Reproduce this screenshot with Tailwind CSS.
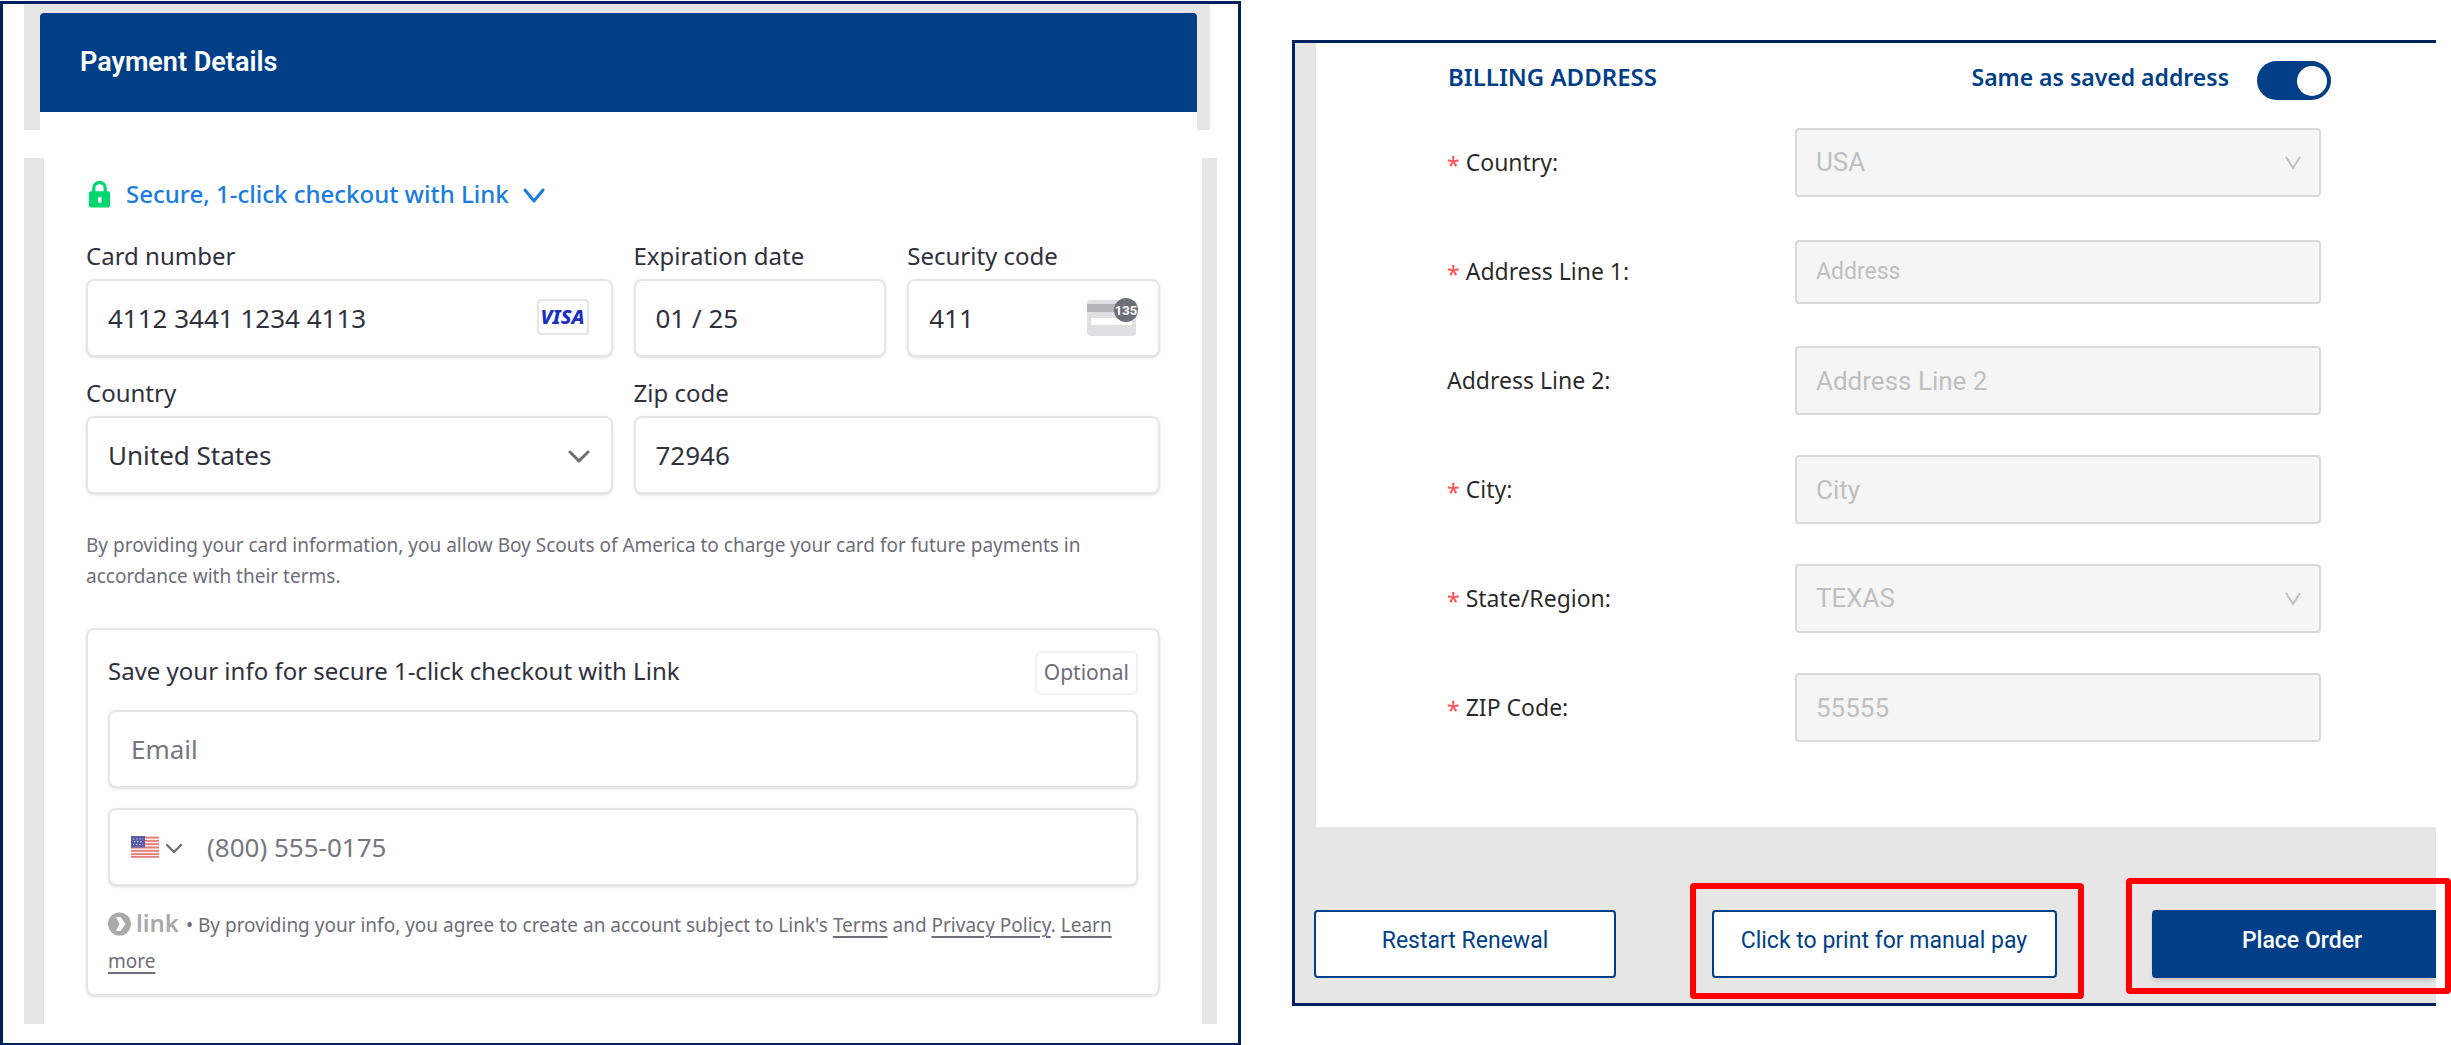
<!DOCTYPE html>
<html lang="en">
<head>
    <meta charset="UTF-8">
    <meta name="viewport" content="width=device-width, initial-scale=1.0">
    <title>Payment Details</title>
    <script src="https://cdn.jsdelivr.net/npm/@tailwindcss/browser@4"></script>
</head>
<body class="bg-white font-['Noto_Sans',sans-serif] text-[#30313d]">
    <main class="grid grid-cols-[1241fr_1144fr] items-start gap-[51px] pt-px pr-[15px]">

        <!-- Card payment -->
        <section class="border-[3px] border-[#002060] pb-[19px]">
            <div class="ml-[21px] mr-7 bg-[#e6e6e6] pt-[9px] pl-4 pr-[13px]">
                <div class="bg-white pb-[18px]">
                    <h1 class="flex h-[99px] items-center rounded-t-sm bg-[#003f87] px-10 font-[Roboto,sans-serif] text-[27px] font-semibold text-white">Payment Details</h1>
                </div>
            </div>

            <form class="mt-7 ml-[21px] mr-[21px] border-l-[20px] border-r-[15px] border-[#e6e6e6] px-[42px] pt-[18px] pb-7">
                <button type="button" class="flex items-center text-2xl leading-9 font-medium text-[#1a7be0]">
                    <svg class="mr-[15px] ml-0.5 h-7 w-[23px]" viewBox="0 0 24 28" fill="none">
                        <path d="M6 13V8a6 6 0 0 1 12 0v5" stroke="#00d66f" stroke-width="3.4"/>
                        <rect x="1" y="11" width="22" height="17" rx="2" fill="#00d66f"/>
                        <rect x="10.5" y="17" width="3.5" height="6" rx="1" fill="#fff"/>
                    </svg>
                    <span>Secure, 1-click checkout with Link</span>
                    <svg class="mt-1 ml-[14px] h-4 w-[22px]" viewBox="0 0 22 16" fill="none" stroke="#1a7be0" stroke-width="3" stroke-linecap="round" stroke-linejoin="round">
                        <path d="M2 2l9 11 9-11"/>
                    </svg>
                </button>

                <div class="mt-7 grid grid-cols-4 gap-x-[21px] gap-y-5">
                    <div class="col-span-2">
                        <label for="card" class="block pb-[7px] text-2xl leading-8">Card number</label>
                        <div class="relative">
                            <input id="card" type="text" value="4112 3441 1234 4113" class="block h-[78px] w-full rounded-lg border-2 border-[#e6e6e6] bg-white pl-5 pr-24 text-[26px] shadow-sm">
                            <span class="absolute top-5 right-6 flex h-9 w-[52px] items-center justify-center rounded-sm border-2 border-[#e6e6e6] bg-white text-xl font-extrabold italic text-[#1a2fc4]">VISA</span>
                        </div>
                    </div>
                    <div>
                        <label for="expiry" class="block pb-[7px] text-2xl leading-8">Expiration date</label>
                        <input id="expiry" type="text" value="01 / 25" class="block h-[78px] w-full rounded-lg border-2 border-[#e6e6e6] bg-white px-5 text-[26px] shadow-sm">
                    </div>
                    <div>
                        <label for="cvc" class="block pb-[7px] text-2xl leading-8">Security code</label>
                        <div class="relative">
                            <input id="cvc" type="text" value="411" class="block h-[78px] w-full rounded-lg border-2 border-[#e6e6e6] bg-white pl-5 pr-24 text-[26px] shadow-sm">
                            <svg class="absolute top-[18px] right-[21px] h-10 w-[52px]" viewBox="0 0 52 40">
                                <rect x="0" y="3" width="49" height="36" rx="4" fill="#e0e0e2"/>
                                <rect x="0" y="7" width="49" height="8" fill="#b3b3b8"/>
                                <rect x="4" y="21" width="41" height="7" rx="1" fill="#fff"/>
                                <circle cx="39" cy="13" r="12" fill="#6d6e78"/>
                                <text x="39" y="18" text-anchor="middle" font-family="Roboto, sans-serif" font-size="13" font-weight="700" fill="#fff">135</text>
                            </svg>
                        </div>
                    </div>
                    <div class="col-span-2">
                        <label for="country" class="block pb-[7px] text-2xl leading-8">Country</label>
                        <div class="relative">
                            <select id="country" class="block h-[78px] w-full appearance-none rounded-lg border-2 border-[#e6e6e6] bg-white pl-5 pr-16 text-[26px] shadow-sm">
                                <option>United States</option>
                            </select>
                            <svg class="pointer-events-none absolute top-[34px] right-[23px] h-[14px] w-[22px]" viewBox="0 0 22 14" fill="none" stroke="#6d6e78" stroke-width="3" stroke-linecap="round" stroke-linejoin="round">
                                <path d="M2 2l9 9 9-9"/>
                            </svg>
                        </div>
                    </div>
                    <div class="col-span-2">
                        <label for="zip" class="block pb-[7px] text-2xl leading-8">Zip code</label>
                        <input id="zip" type="text" value="72946" class="block h-[78px] w-full rounded-lg border-2 border-[#e6e6e6] bg-white px-5 text-[26px] shadow-sm">
                    </div>
                </div>

                <p class="mt-9 text-[19px] leading-[31px] text-[#6d6e78]">By providing your card information, you allow Boy Scouts of America to charge your card for future payments in accordance with their terms.</p>

                <div class="mt-9 rounded-lg border-2 border-[#e6e6e6] px-5 pt-[21px] pb-[15px] shadow-sm">
                    <div class="flex items-start justify-between">
                        <h2 class="text-2xl leading-10">Save your info for secure 1-click checkout with Link</h2>
                        <span class="flex h-11 items-center rounded-md border-2 border-[#f0f0f0] px-[7px] text-[21px] text-[#6d6e78]">Optional</span>
                    </div>
                    <input type="email" aria-label="Email" placeholder="Email" class="mt-[15px] block h-[78px] w-full rounded-lg border-2 border-[#e6e6e6] bg-white px-[21px] text-[26px] shadow-sm placeholder:text-[#757680]">
                    <div class="mt-5 flex h-[78px] items-center rounded-lg border-2 border-[#e6e6e6] bg-white pl-[21px] shadow-sm">
                        <button type="button" aria-label="Phone country" class="flex items-center gap-1.5">
                            <svg class="h-[22px] w-7" viewBox="0 0 28 22">
                                <rect width="28" height="22" rx="2" fill="#fbe9e7"/>
                                <path d="M0 1.6h28M0 4.900h28M0 8.2h28M0 11.5h28M0 14.8h28M0 18.1h28M0 20.900h28" stroke="#e57f7a" stroke-width="1.8"/>
                                <rect width="14" height="11.5" fill="#5a5ea8"/>
                                <path d="M2 3h10M3 5.7h9M2 8.5h10" stroke="#c9cbe8" stroke-width="1.2" stroke-dasharray="1.2 2"/>
                            </svg>
                            <svg class="mt-1 h-3 w-[18px]" viewBox="0 0 18 12" fill="none" stroke="#6d6e78" stroke-width="2.4" stroke-linecap="round" stroke-linejoin="round">
                                <path d="M2 2l7 7 7-7"/>
                            </svg>
                        </button>
                        <input type="tel" aria-label="Phone number" placeholder="(800) 555-0175" class="ml-6 min-w-0 flex-1 text-[26px] placeholder:text-[#757680]">
                    </div>
                    <p class="mt-[21px] text-[19px] leading-9 text-[#6d6e78]">
                        <svg class="inline h-6 w-[23px] align-[-4px]" viewBox="0 0 23 24">
                            <circle cx="11.5" cy="12" r="11.5" fill="#aaaaaa"/>
                            <path d="M8 5h4.5l5 7-5 7H8l3.500-7z" fill="#fff"/>
                        </svg>
                        <span class="mr-0.5 text-2xl leading-8 font-semibold text-[#aaaaaa]">link</span>
                        • By providing your info, you agree to create an account subject to Link's <a href="#" class="underline decoration-2 underline-offset-4">Terms</a> and <a href="#" class="underline decoration-2 underline-offset-4">Privacy Policy</a>. <a href="#" class="underline decoration-2 underline-offset-4">Learn more</a>
                    </p>
                </div>
            </form>
        </section>

        <!-- Billing address -->
        <section class="mt-[39px] border-y-[3px] border-l-[3px] border-[#002060] bg-[#e6e6e6]">
            <form>
                <div class="ml-[21px] bg-white pt-[18px] pb-[65px]">
                    <div class="flex items-start pr-[105px] pl-[132px] font-semibold text-[#003f87]">
                        <h2 class="text-2xl leading-8">BILLING ADDRESS</h2>
                        <label for="same" class="mr-7 ml-auto text-[23px] leading-8">Same as saved address</label>
                        <input id="same" type="checkbox" role="switch" checked class="flex h-[39px] w-[74px] appearance-none items-center justify-end rounded-full bg-[#003f87] pr-1 before:block before:size-[30px] before:rounded-full before:bg-white">
                    </div>

                    <div class="mt-2 pr-[115px] pl-[131px] font-[Roboto,sans-serif]">
                        <div class="flex h-[109px] items-center">
                            <label for="bill-country" class="w-[348px] shrink-0 font-['Noto_Sans',sans-serif] text-[23px] text-black/85"><span class="mr-1.5 align-[-3px] leading-none text-[#ff4d4f]">*</span>Country:</label>
                            <div class="relative flex-1">
                                <select id="bill-country" disabled class="block h-[69px] w-full appearance-none rounded-sm border-2 border-[#d9d9d9] bg-[#f5f5f5] pl-[19px] text-[26px] text-[#bfbfbf] opacity-100">
                                    <option>USA</option>
                                </select>
                                <svg class="pointer-events-none absolute top-7 right-5 h-[14px] w-4" viewBox="0 0 16 14" fill="none" stroke="#bfbfbf" stroke-width="2">
                                    <path d="M1 1l7 11 7-11"/>
                                </svg>
                            </div>
                        </div>
                        <div class="flex h-[109px] items-center">
                            <label for="line1" class="w-[348px] shrink-0 font-['Noto_Sans',sans-serif] text-[23px] text-black/85"><span class="mr-1.5 align-[-3px] leading-none text-[#ff4d4f]">*</span>Address Line 1:</label>
                            <input id="line1" type="text" disabled placeholder="Address" class="h-16 min-w-0 flex-1 rounded-sm border-2 border-[#d9d9d9] bg-[#f5f5f5] px-[19px] text-[23px] placeholder:text-[#bfbfbf]">
                        </div>
                        <div class="flex h-[109px] items-center">
                            <label for="line2" class="w-[348px] shrink-0 font-['Noto_Sans',sans-serif] text-[23px] text-black/85">Address Line 2:</label>
                            <input id="line2" type="text" disabled placeholder="Address Line 2" class="h-[69px] min-w-0 flex-1 rounded-sm border-2 border-[#d9d9d9] bg-[#f5f5f5] px-[19px] text-[26px] placeholder:text-[#bfbfbf]">
                        </div>
                        <div class="flex h-[109px] items-center">
                            <label for="city" class="w-[348px] shrink-0 font-['Noto_Sans',sans-serif] text-[23px] text-black/85"><span class="mr-1.5 align-[-3px] leading-none text-[#ff4d4f]">*</span>City:</label>
                            <input id="city" type="text" disabled placeholder="City" class="h-[69px] min-w-0 flex-1 rounded-sm border-2 border-[#d9d9d9] bg-[#f5f5f5] px-[19px] text-[26px] placeholder:text-[#bfbfbf]">
                        </div>
                        <div class="flex h-[109px] items-center">
                            <label for="state" class="w-[348px] shrink-0 font-['Noto_Sans',sans-serif] text-[23px] text-black/85"><span class="mr-1.5 align-[-3px] leading-none text-[#ff4d4f]">*</span>State/Region:</label>
                            <div class="relative flex-1">
                                <select id="state" disabled class="block h-[69px] w-full appearance-none rounded-sm border-2 border-[#d9d9d9] bg-[#f5f5f5] pl-[19px] text-[26px] text-[#bfbfbf] opacity-100">
                                    <option>TEXAS</option>
                                </select>
                                <svg class="pointer-events-none absolute top-7 right-5 h-[14px] w-4" viewBox="0 0 16 14" fill="none" stroke="#bfbfbf" stroke-width="2">
                                    <path d="M1 1l7 11 7-11"/>
                                </svg>
                            </div>
                        </div>
                        <div class="flex h-[109px] items-center">
                            <label for="bill-zip" class="w-[348px] shrink-0 font-['Noto_Sans',sans-serif] text-[23px] text-black/85"><span class="mr-1.5 align-[-3px] leading-none text-[#ff4d4f]">*</span>ZIP Code:</label>
                            <input id="bill-zip" type="text" disabled placeholder="55555" class="h-[69px] min-w-0 flex-1 rounded-sm border-2 border-[#d9d9d9] bg-[#f5f5f5] px-[19px] text-[26px] placeholder:text-[#bfbfbf]">
                        </div>
                    </div>
                </div>

                <div class="flex justify-between pt-[83px] pb-[25px] pl-[19px] font-[Roboto,sans-serif] text-[23px] text-[#003f87]">
                    <button type="button" class="h-[68px] w-[302px] rounded-sm border-2 border-[#003f87] bg-white pb-1.5">Restart Renewal</button>
                    <div class="relative">
                        <button type="button" class="h-[68px] w-[345px] rounded-sm border-2 border-[#003f87] bg-white pb-1.5">Click to print for manual pay</button>
                        <span class="pointer-events-none absolute -top-[27px] -right-[27px] -bottom-[21px] -left-[22px] rounded-sm border-[6px] border-[#ff0000]"></span>
                    </div>
                    <div class="relative">
                        <button type="submit" class="h-[68px] w-[284px] rounded-l-sm bg-[#003f87] pb-1.5 pl-4 font-medium text-white shadow-md">Place Order</button>
                        <span class="pointer-events-none absolute -top-8 -right-[15px] -bottom-4 -left-[26px] rounded-sm border-[6px] border-[#ff0000]"></span>
                    </div>
                </div>
            </form>
        </section>
    </main>
</body>
</html>
